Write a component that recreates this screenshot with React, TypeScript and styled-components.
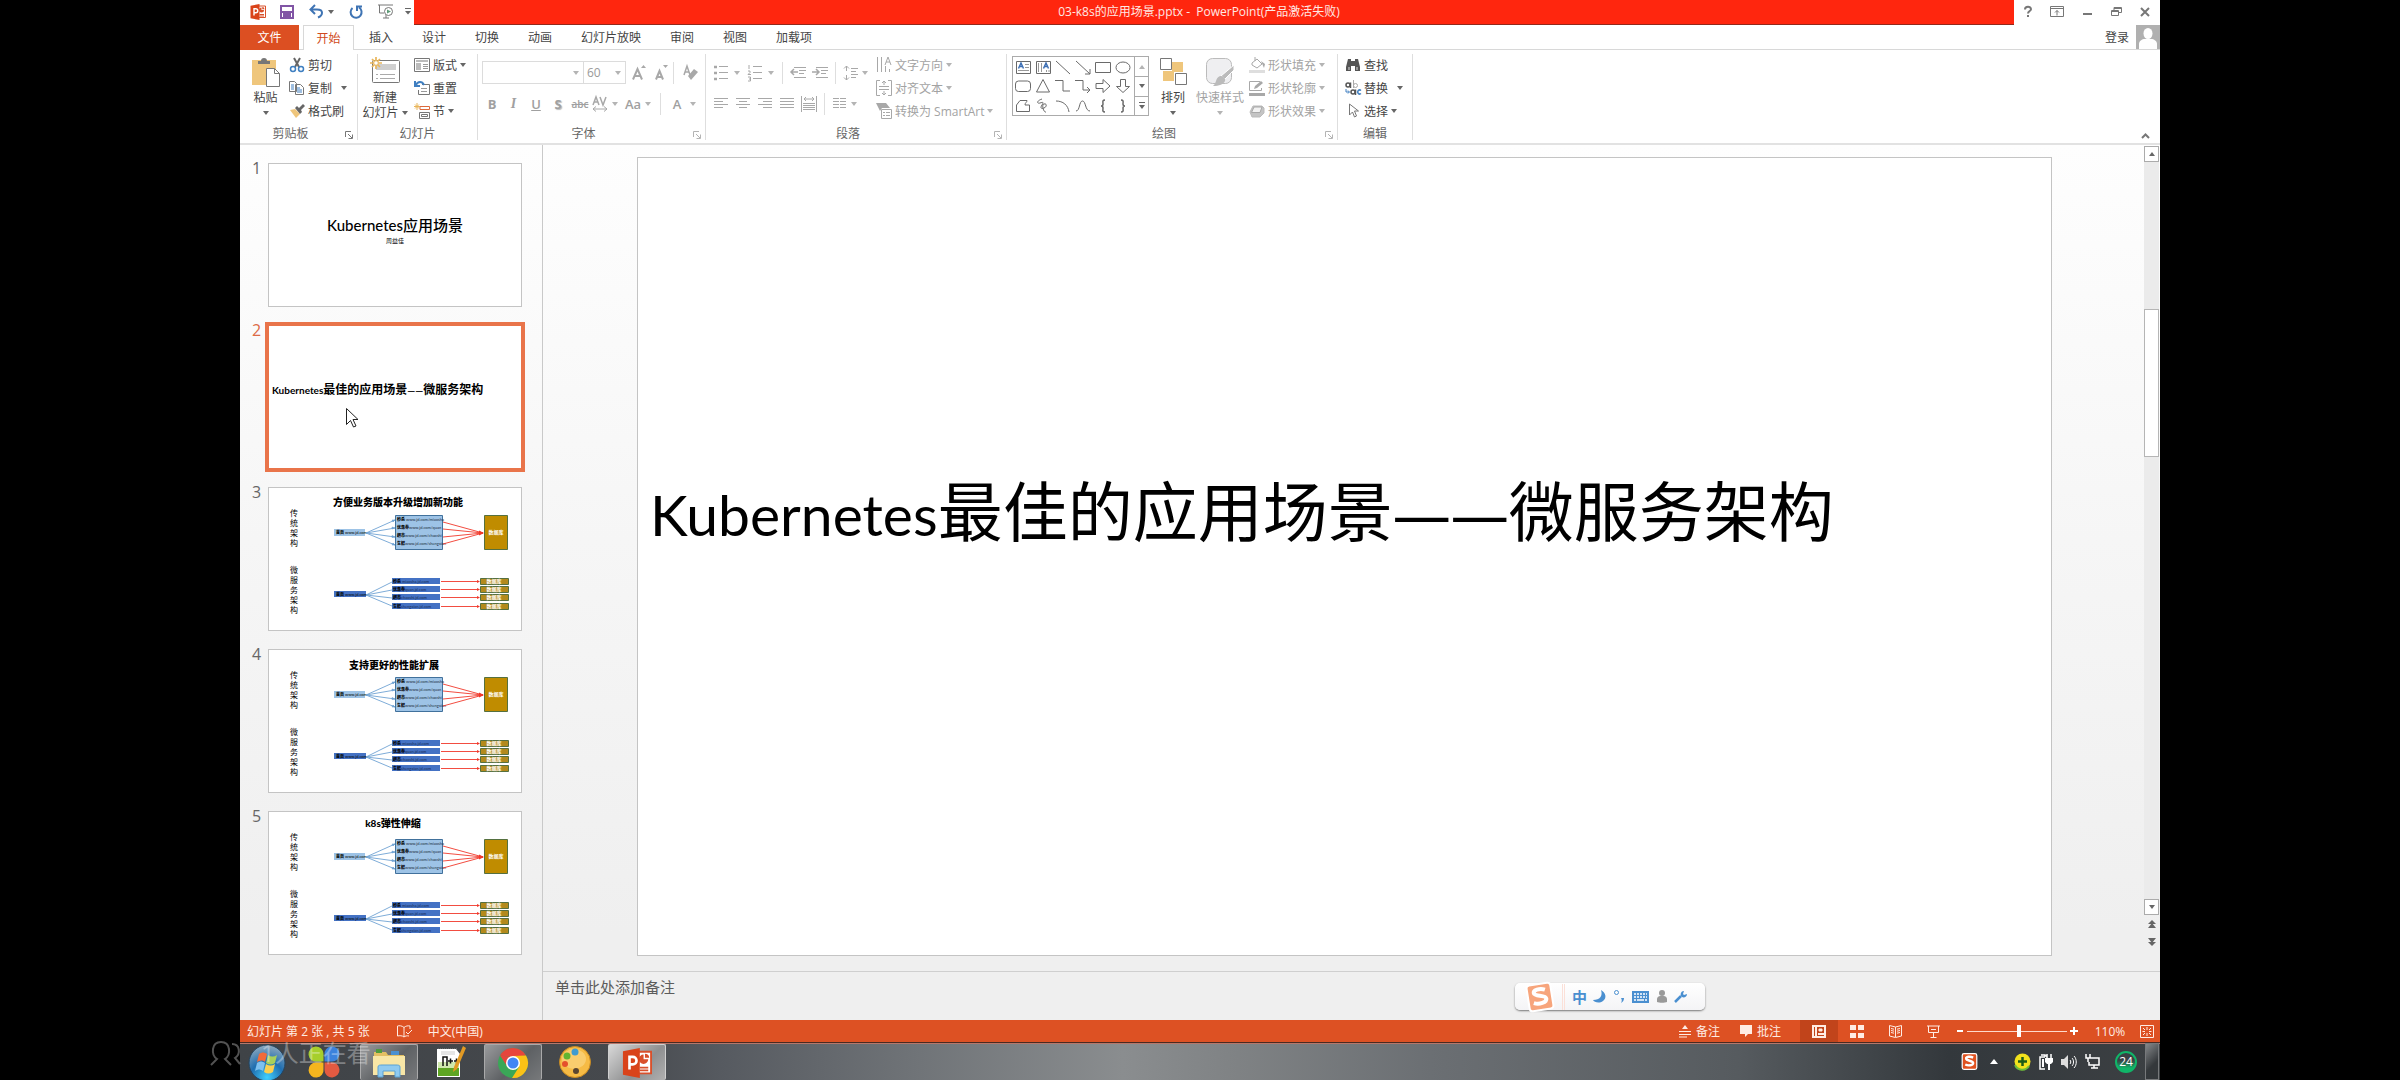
import React from "react";
import styled, { createGlobalStyle, css } from "styled-components";

const UI_FONT = '"Open Sans", "Noto Sans CJK SC", sans-serif';
const SLIDE_FONT = 'Lato, "Noto Sans CJK SC", sans-serif';

const Global = createGlobalStyle`
  * { box-sizing: border-box; }
  body { margin: 0; background: #000; font-family: ${UI_FONT}; font-size: 12px; color: #444; }
  button, select, input, textarea { font: inherit; color: inherit; margin: 0; padding: 0; border: 0; background: none; }
  svg { display: block; flex: none; overflow: visible; }
  h1, h2, p, ol { margin: 0; padding: 0; font: inherit; }
`;

/* ---------- shell ---------- */
const Desktop = styled.div`
  position: relative;
  display: flex;
  flex-direction: column;
  min-height: 100vh;
  margin: 0 10%;
  background: #fff;
`;
const TitleBar = styled.header`
  display: flex;
  height: 25px;
  background: #fff;
`;
const QuickAccess = styled.div`
  display: flex;
  align-items: center;
  padding-left: 10px;
  width: 174px;
  height: 23px;
`;
const QuickButton = styled.button<{ $w: number; $gap?: number }>`
  display: flex;
  align-items: center;
  justify-content: space-between;
  width: ${(p) => p.$w}px;
  margin-right: ${(p) => p.$gap ?? 0}px;
`;
const TitleText = styled.h1`
  flex: 1;
  padding-right: 30px;
  background: #ff260e;
  border-bottom: 1px solid #93281b;
  color: #ffe9e4;
  line-height: 24px;
  text-align: center;
  white-space: pre;
`;
const WindowControls = styled.div`
  display: flex;
  align-items: center;
  justify-content: space-between;
  width: 146px;
  height: 23px;
  padding: 0 10px;
`;
const PlainButton = styled.button`
  display: flex;
  align-items: center;
  justify-content: center;
`;

/* ---------- tabs ---------- */
const TabBar = styled.nav`
  display: flex;
  height: 25px;
  border-bottom: 1px solid #d8d8d8;
  line-height: 23px;
`;
const FileTab = styled.button`
  width: 59px;
  height: 25px;
  background: #dc4f22;
  color: #fff;
`;
const ActiveTab = styled.button`
  width: 51px;
  height: 25px;
  margin: 0 15px 0 4px;
  border: 1px solid #d8d8d8;
  border-bottom: 0;
  background: #fff;
  color: #d04a20;
`;
const TabList = styled.div`
  display: flex;
  flex: 1;
  gap: 29px;
`;
const SignIn = styled.button`
  margin-right: 7px;
`;

/* ---------- ribbon ---------- */
const Ribbon = styled.section`
  display: flex;
  height: 95px;
  padding-top: 4px;
  border-bottom: 2px solid #e2e2e2;
`;
const Group = styled.div<{ $w: number }>`
  display: flex;
  flex-direction: column;
  width: ${(p) => p.$w}px;
  height: 86px;
  border-right: 1px solid #dedede;
`;
const GroupBody = styled.div<{ $pad: number; $gap?: number }>`
  display: flex;
  height: 73px;
  padding-left: ${(p) => p.$pad}px;
  gap: ${(p) => p.$gap ?? 0}px;
`;
const GroupFoot = styled.div`
  display: flex;
  align-items: center;
  height: 13px;
  line-height: 13px;
  color: #666;
`;
const GroupName = styled.span`
  flex: 1;
  text-align: center;
`;
const Launcher = styled.button`
  width: 16px;
  padding: 3px 0 0 4px;
`;
const BigButton = styled.button<{ $w: number; $off?: boolean }>`
  display: flex;
  flex-direction: column;
  align-items: center;
  width: ${(p) => p.$w}px;
  height: 67px;
  padding-top: 3px;
  line-height: 15px;
  white-space: nowrap;
  color: ${(p) => (p.$off ? "#a3a3a3" : "#444")};
`;
const BigIcon = styled.span`
  height: 33px;
`;
const BigLine = styled.span`
  display: flex;
  align-items: center;
  gap: 3px;
  height: 15px;
`;
const RowStack = styled.div`
  display: flex;
  flex-direction: column;
`;
const RowButton = styled.button<{ $off?: boolean }>`
  display: flex;
  align-items: center;
  gap: 3px;
  height: 23px;
  padding-bottom: 2px;
  white-space: nowrap;
  color: ${(p) => (p.$off ? "#a3a3a3" : "#444")};
`;
const ToolRows = styled.div`
  display: flex;
  flex-direction: column;
  gap: 8px;
  padding-top: 7px;
`;
const ToolRow = styled.div`
  display: flex;
  align-items: center;
  height: 23px;
`;
const Tool = styled.button<{ $w: number }>`
  display: flex;
  align-items: center;
  justify-content: space-between;
  width: ${(p) => p.$w}px;
  height: 22px;
  color: #a0a0a0;
`;
const Glyph = styled(Tool)<{ $look?: "b" | "i" | "u" | "s" | "x" }>`
  justify-content: center;
  font-size: 13px;
  font-weight: 600;
  ${(p) => p.$look === "b" && css`font-weight: 700;`}
  ${(p) => p.$look === "i" && css`font-family: "Liberation Serif", serif; font-style: italic; font-size: 14px;`}
  ${(p) => p.$look === "u" && css`text-decoration: underline;`}
  ${(p) => p.$look === "s" && css`font-weight: 700; text-shadow: 1px 1px 1px #bbb;`}
  ${(p) => p.$look === "x" && css`text-decoration: line-through; font-size: 10px;`}
`;
const Gap = styled.span<{ $w: number }>`
  width: ${(p) => p.$w}px;
`;
const Rule = styled.span`
  width: 1px;
  height: 22px;
  background: #dedede;
`;
const Combo = styled.label<{ $w: number }>`
  display: flex;
  align-items: center;
  width: ${(p) => p.$w}px;
  height: 23px;
  padding: 0 4px 0 3px;
  margin-right: -1px;
  border: 1px solid #dcdcdc;
  color: #9a9a9a;
  select { flex: 1; min-width: 0; appearance: none; outline: 0; opacity: 1; }
`;
const Gallery = styled.div`
  display: flex;
  width: 137px;
  height: 60px;
  margin-top: 2px;
  border: 1px solid #ababab;
`;
const Shapes = styled.div`
  display: grid;
  flex: 1;
  grid-template-columns: repeat(6, 20px);
  grid-auto-rows: 1fr;
`;
const GallerySide = styled.div`
  display: grid;
  grid-template-rows: 1fr 1fr 1fr;
  width: 14px;
  button { display: grid; place-items: center; border-left: 1px solid #ababab; }
  button + button { border-top: 1px solid #ababab; }
`;
const RibbonEnd = styled.div`
  display: flex;
  flex: 1;
  align-items: flex-end;
  justify-content: flex-end;
  padding: 0 10px 4px 0;
`;

/* ---------- workspace ---------- */
const Workspace = styled.main`
  display: flex;
  flex: 1;
  background: linear-gradient(#fefefe, #f6f6f6 45%, #efefef 90%);
`;
const ThumbPane = styled.ol`
  display: flex;
  flex-direction: column;
  gap: 18px;
  width: 303px;
  padding: 18px 0 0 12px;
  border-right: 1px solid #c9c9c9;
  list-style: none;
`;
const ThumbItem = styled.li<{ $on?: boolean }>`
  display: flex;
  color: ${(p) => (p.$on ? "#dd6a45" : "#666")};
  font-size: 16px;
  line-height: 10px;
`;
const ThumbNumber = styled.span`
  width: 16px;
`;
const Thumb = styled.button<{ $on?: boolean }>`
  position: relative;
  display: flex;
  flex-direction: column;
  justify-content: center;
  width: 254px;
  height: 144px;
  background: #fff;
  color: #000;
  font-family: ${SLIDE_FONT};
  outline: ${(p) => (p.$on ? "4px solid #e9744a" : "1px solid #c4c4c4")};
  outline-offset: -1px;
`;
const ThumbTitle = styled.span`
  align-self: center;
  padding-bottom: 4px;
  font-size: 15px;
  font-weight: 500;
  line-height: 16px;
`;
const ThumbAuthor = styled.span`
  align-self: center;
  padding-bottom: 8px;
  font-size: 6px;
  line-height: 8px;
`;
const ThumbHeading = styled.span`
  padding: 0 0 14px 4px;
  font-size: 12px;
  line-height: 14px;
  font-weight: 700;
  text-align: left;
  white-space: nowrap;
`;
const ThumbLatin = styled.span`
  font-size: 10px;
`;
const Pointer = styled.svg`
  position: absolute;
  left: 78px;
  top: 83px;
`;
const Editor = styled.section`
  display: flex;
  flex: 1;
  flex-direction: column;
  min-width: 0;
`;
const Stage = styled.div`
  display: flex;
  flex: 1;
`;
const Canvas = styled.div`
  flex: 1;
  padding: 12px 92px 14px 94px;
`;
const Slide = styled.article`
  display: flex;
  align-items: center;
  aspect-ratio: 1415 / 799;
  padding: 0 0 88px 12px;
  border: 1px solid #c4c4c4;
  background: #fff;
`;
const SlideTitle = styled.h2`
  color: #000;
  font-family: ${SLIDE_FONT};
  font-size: 65px;
  line-height: 80px;
  white-space: nowrap;
`;
const SlideLatin = styled.span`
  font-size: 57px;
`;
const SlideDash = styled.span`
  font-family: "Open Sans", sans-serif;
  font-size: 58px;
`;
const ScrollColumn = styled.div`
  display: flex;
  flex-direction: column;
  width: 16px;
  padding: 1px 1px 20px 0;
`;
const ScrollTrack = styled.div`
  flex: 1;
  padding-top: 147px;
  background: #ebebeb;
`;
const ScrollThumb = styled.div`
  height: 148px;
  border: 1px solid #b5b5b5;
  background: #fff;
`;
const ScrollButton = styled.button<{ $plain?: boolean }>`
  display: grid;
  place-items: center;
  height: ${(p) => (p.$plain ? 18 : 16)}px;
  border: ${(p) => (p.$plain ? "0" : "1px solid #ababab")};
  background: ${(p) => (p.$plain ? "transparent" : "#fff")};
`;
const Notes = styled.textarea`
  height: 49px;
  padding: 3px 0 0 12px;
  border-top: 1px solid #cfcfcf;
  font-size: 15px;
  line-height: 24px;
  resize: none;
  outline: 0;
  &::placeholder { color: #5c5c5c; opacity: 1; }
`;

/* ---------- floating input bar ---------- */
const InputBar = styled.div`
  position: absolute;
  right: 455px;
  bottom: 70px;
  display: flex;
  align-items: center;
  width: 190px;
  height: 27px;
  padding-left: 11px;
  border-radius: 5px;
  background: linear-gradient(#fff, #f4f4f6);
  box-shadow: 0 1px 2px #777;
  color: #4a8fd0;
`;
const InputLang = styled.span`
  width: 21px;
  font-size: 15px;
  font-weight: 700;
  line-height: 20px;
`;
const InputRule = styled.span`
  width: 3px;
  height: 26px;
  margin: 0 7px 0 8px;
  border: solid #fbe0d8;
  border-width: 0 1px;
`;

/* ---------- status bar ---------- */
const StatusBar = styled.footer`
  display: flex;
  align-items: center;
  height: 22px;
  padding: 0 6px 0 7px;
  background: #dd5123;
  color: #ffece4;
  white-space: pre;
`;
const StatusButton = styled.button<{ $mr: number }>`
  display: flex;
  align-items: center;
  gap: 5px;
  margin-right: ${(p) => p.$mr}px;
`;
const Spacer = styled.span`
  flex: 1;
`;
const ViewButton = styled.button<{ $on?: boolean }>`
  display: grid;
  place-items: center;
  width: 38px;
  height: 22px;
  background: ${(p) => (p.$on ? "#c1441b" : "transparent")};
`;
const Zoom = styled.input`
  width: 100px;
  height: 14px;
  margin: 0 3px 0 4px;
  appearance: none;
  background: linear-gradient(#ffd9cb, #ffd9cb) center / 100% 1px no-repeat;
  &::-webkit-slider-thumb { appearance: none; width: 4px; height: 12px; background: #fff; }
`;
const ZoomValue = styled.button`
  width: 34px;
  margin: 0 13px 0 15px;
`;

/* ---------- taskbar ---------- */
const TaskBar = styled.footer`
  display: flex;
  height: 38px;
  border-top: 1px solid #4a2a22;
  box-shadow: inset 0 1px #b5776a;
  background: linear-gradient(90deg, #3f4347 0%, #46494d 20%, #565a60 25%, #6f7377 35%, #8a8d8f 46%, #7f8284 52%, #6b6f73 62%, #565b5f 78%, #33383c 89%, #3c4043 100%);
`;
const TaskButton = styled.button<{ $w: number; $tone?: "open" | "active"; $gap?: number }>`
  display: grid;
  place-items: center;
  width: ${(p) => p.$w}px;
  margin: 1px ${(p) => p.$gap ?? 0}px 0 0;
  ${(p) =>
    p.$tone === "open" &&
    css`background: linear-gradient(135deg, #9a9b9d, #5e6164 55%, #77797b); border: 1px solid #a9a9aa; border-bottom: 0; border-radius: 2px;`}
  ${(p) =>
    p.$tone === "active" &&
    css`background: linear-gradient(135deg, #d8d8d8, #8f9091 60%, #b0b0b0); border: 1px solid #d0d0d0; border-bottom: 0; border-radius: 2px;`}
`;
const Tray = styled.div`
  display: flex;
  align-items: center;
  gap: 8px;
  margin-left: auto;
  padding-right: 1px;
`;
const TrayBadge = styled.span`
  display: grid;
  place-items: center;
  width: 22px;
  height: 22px;
  margin-left: 7px;
  border: 2px solid #10b568;
  border-radius: 50%;
  background: linear-gradient(#3b4044 40%, #10b568 85%);
  color: #fff;
  line-height: 18px;
`;
const ShowDesktop = styled.button`
  align-self: stretch;
  width: 14px;
  border: 1px solid #77797b;
  background: linear-gradient(135deg, #85888a, #34383b 60%);
`;
const Watermark = styled.div`
  position: absolute;
  left: -30px;
  bottom: 14px;
  display: flex;
  align-items: center;
  gap: 21px;
  color: #fff;
  font-size: 24px;
  line-height: 24px;
  opacity: 0.32;
  pointer-events: none;
`;

/* ---------- icon helpers ---------- */
type IcoProps = { w: number; h: number; children: React.ReactNode; c?: string; sw?: number };
const Ico = ({ w, h, children, c = "#777", sw = 1 }: IcoProps) => (
  <svg width={w} height={h} viewBox={`0 0 ${w} ${h}`} fill="none" stroke={c} strokeWidth={sw} aria-hidden="true">
    {children}
  </svg>
);
const Caret = ({ off, up, ml }: { off?: boolean; up?: boolean; ml?: number }) => (
  <>
    {ml ? <Gap $w={ml} /> : null}
    <Ico w={6} h={4} c="none">
      <path d={up ? "M0 4h6L3 0z" : "M0 0h6L3 4z"} fill={off ? "#b4b4b4" : "#666"} />
    </Ico>
  </>
);
const PptLogo = ({ s }: { s: number }) => (
  <svg width={s} height={s} viewBox="0 0 32 32" aria-hidden="true">
    <path d="M17 4h14v23H17z" fill="#fff" stroke="#d9502b" strokeWidth="2" />
    <path d="M23 7a5 5 0 1 0 5 5h-5zM24.500 6v4.500H29A4.500 4.500 0 0 0 24.500 6zM19 20h9v1.800h-9zM19 23h9v1.800h-9z" fill="#d9502b" />
    <path d="M1 3.500 19 0v32L1 28.500z" fill="#d9431a" />
    <path d="M8 23V9.500h3.500a4 4 0 0 1 0 8H8" fill="none" stroke="#fff" strokeWidth="2.800" />
  </svg>
);
const LauncherIcon = ({ off }: { off?: boolean }) => (
  <Ico w={8} h={8} c={off ? "#b4b4b4" : "#777"}>
    <path d="M.5 6V.5H6M3 3l4 4M7.500 3.500v4h-4" />
  </Ico>
);
const lines = (rows: number[][]) => rows.map(([x, y, l], i) => <path key={i} d={`M${x} ${y}.5h${l}`} />);
const G = "#a8a8a8";

const SHAPES: React.ReactNode[] = [
  <g key="a"><path d="M3.500 4.500h14v12h-14z" /><path d="M12 7.500h4M12 10.500h4M5 13.500h11" stroke="#999" /><path d="M5.500 11.500 8 6l2.500 5.500M6.500 9.500h3" stroke="#3d6fb4" strokeWidth="1.500" /></g>,
  <g key="b"><path d="M3.500 4.500h14v12h-14z" /><path d="M5.500 6v9M8.500 6v9M13.500 13v2M16 13v2" stroke="#999" /><path d="M10.500 11.500 13 6l2.500 5.500M11.500 9.500h3" stroke="#3d6fb4" strokeWidth="1.500" /></g>,
  <path key="c" d="M3 4l14 13" />,
  <path key="d" d="M3 4l14 13M17 12v5h-5" />,
  <path key="e" d="M2.500 5.500h15v10h-15z" />,
  <ellipse key="f" cx="10" cy="10.500" rx="7" ry="5.500" />,
  <rect key="g" x="2.500" y="5" width="15" height="10.500" rx="3" />,
  <path key="h" d="M10 3.500 16.500 16h-13z" />,
  <path key="i" d="M2 4.500h8V15h7" />,
  <path key="j" d="M2 4.500h8V14h7M14 11l3 3-3 3" />,
  <path key="k" d="M3 7.500h7V3.500l7 6.500-7 6.500v-4H3z" />,
  <path key="l" d="M7.500 3.500v7h-4l6.500 6 6.500-6h-4v-7z" />,
  <path key="m" d="M3.500 15.500V9L7 4.500h7c0 2-2 2-2 4.500h4.500v6.500z" />,
  <path key="n" d="M9 3C3 5 4 8 7 7s4-1 2 2-1 4 2 3 3-5 0-4 0 9 2 8" />,
  <path key="o" d="M3 5c7 0 12 4 13 11" />,
  <path key="p" d="M3 15C7 15 6 5 9.500 5S12 15 17 15" />,
  <path key="q" d="M12 4c-3 0-2 2-2 4s-2 2-2 2 2 0 2 2-1 4 2 4" strokeWidth="1.500" />,
  <path key="r" d="M8 4c3 0 2 2 2 4s2 2 2 2-2 0-2 2 1 4-2 4" strokeWidth="1.500" />,
];

/* ---------- slide diagrams ---------- */
const TOP_ROWS = [
  ["秒杀", " www.jd.com/miaosha"],
  ["优惠券", "www.jd.com/quan"],
  ["超市", "www.jd.com/chaoshi"],
  ["生鲜", "www.jd.com/shengxian"],
];
const LOW_ROWS = [
  ["秒杀", " miaosha.jd.com"],
  ["优惠券", "quan.jd.com"],
  ["超市", "chaoshi.jd.com"],
  ["生鲜", "shengxian.jd.com"],
];
const LOW_Y = [91, 99, 107, 116];

const Diagram = ({ title, y, x }: { title: string; y: number; x: number }) => (
  <svg width="254" height="144" viewBox="0 0 254 144" fontFamily={SLIDE_FONT}>
    <text x={x} y={y} fontSize="10" fontWeight="900" textAnchor="middle">{title}</text>
    {"传统架构".split("").map((c, i) => <text key={i} x="22" y={29 + i * 10} fontSize="8">{c}</text>)}
    {"微服务架构".split("").map((c, i) => <text key={i} x="22" y={86 + i * 10} fontSize="8">{c}</text>)}
    <path d="M66 42h31v7H66z" fill="#9dc3e6" />
    <path d="M66 104h32v6H66z" fill="#4472c4" />
    <text x="68" y="47" fontSize="4"><tspan fontWeight="900">首页</tspan> www.jd.com</text>
    <text x="68" y="109" fontSize="4"><tspan fontWeight="900">首页</tspan> www.jd.com</text>
    <path d="M98 46l29-13M98 46l29-5M98 46l29 4M98 46l29 12M98 108l26-13M98 108l26-5M98 108l26 3M98 108l26 11" stroke="#6fa3d4" strokeWidth=".9" />
    <path d="M127 33l-3 0 1 2zM127 41l-3-1v2zM127 50l-3-1.500v2zM127 58l-2-2-1 2z" stroke="#6fa3d4" fill="#6fa3d4" strokeWidth=".6" />
    <path d="M127.500 28.500h47v34h-47z" fill="#9dc3e6" stroke="#41719c" />
    {TOP_ROWS.map(([a, b], i) => (
      <text key={a} x="129" y={34 + i * 8} fontSize="4" fill="#1f2d3d"><tspan fontWeight="900" fill="#000">{a}</tspan>{b}</text>
    ))}
    <path d="M175 35l40 11M175 42l40 4M175 50l40-4M175 57l40-11" stroke="#f0392b" strokeWidth=".9" />
    <path d="M211 43.500l5 2.500-5 2.500z" fill="#f0392b" />
    <path d="M216.500 28.500h23v34h-23z" fill="#c08c00" stroke="#55703f" />
    <text x="228" y="47" fontSize="5" fontWeight="700" fill="#fff" textAnchor="middle">数据库</text>
    {LOW_ROWS.map(([a, b], i) => (
      <g key={a}>
        <path d={`M124 ${LOW_Y[i]}h48v6h-48z`} fill="#4472c4" />
        <text x="125" y={LOW_Y[i] + 5} fontSize="4" fill="#172c55"><tspan fontWeight="900" fill="#000">{a}</tspan>{b}</text>
        <path d={`M173 ${LOW_Y[i] + 3}.5h37`} stroke="#f0392b" strokeWidth=".9" />
        <path d={`M209 ${LOW_Y[i] + 2}l3 1.500-3 1.500z`} fill="#f0392b" />
        <path d={`M212.500 ${LOW_Y[i]}.5h28v6h-28z`} fill="#b38a1c" stroke="#55703f" />
        <text x="226" y={LOW_Y[i] + 5} fontSize="5" fontWeight="700" fill="#fff" textAnchor="middle">数据库</text>
      </g>
    ))}
  </svg>
);

const Foot = ({ name, launch, off }: { name: string; launch?: boolean; off?: boolean }) => (
  <GroupFoot>
    <GroupName>{name}</GroupName>
    {launch && <Launcher aria-label={name}><LauncherIcon off={off} /></Launcher>}
  </GroupFoot>
);

const ClipboardGroup = () => (
  <Group $w={118}>
    <GroupBody $pad={9} $gap={7}>
      <BigButton $w={33}>
        <BigIcon>
          <Ico w={28} h={30}>
            <path d="M0 3h24v25H0z" fill="#efc67c" stroke="none" />
            <path d="M6 7V4h3a3 3 0 0 1 6 0h3v3z" fill="#777" stroke="none" />
            <path d="M14.500 11.500h8l5 5v13h-13z" fill="#fff" /><path d="M22.500 11.500v5h5" />
          </Ico>
        </BigIcon>
        <BigLine>粘贴</BigLine>
        <BigLine><Caret /></BigLine>
      </BigButton>
      <RowStack>
        <RowButton>
          <Ico w={16} h={16}>
            <path d="M5 1l5 9M11 1L6 10" stroke="#666" strokeWidth="2" />
            <circle cx="4" cy="12" r="2.500" stroke="#3f7fc1" strokeWidth="1.500" /><circle cx="12" cy="12" r="2.500" stroke="#3f7fc1" strokeWidth="1.500" />
          </Ico>
          剪切
        </RowButton>
        <RowButton>
          <Ico w={16} h={16}>
            <path d="M.5 1.500h5l2 2v8h-7zM6.500 4.500h5l3 3v7h-8z" fill="#fff" />
            <path d="M2 5h3M2 7h3M2 9h3M8 8h3M8 10h5M8 12h5" stroke="#3f7fc1" />
          </Ico>
          复制<Caret ml={3} />
        </RowButton>
        <RowButton>
          <Ico w={16} h={16} c="none">
            <path d="M1 7l5-1 5 5-4 4z" fill="#efc67c" /><path d="M6 5l2-2 2 2 4-4 2 2-4 4 1 2-2 2z" fill="#666" />
          </Ico>
          格式刷
        </RowButton>
      </RowStack>
    </GroupBody>
    <Foot name="剪贴板" launch />
  </Group>
);

const SlidesGroup = () => (
  <Group $w={120}>
    <GroupBody $pad={5} $gap={7}>
      <BigButton $w={44}>
        <BigIcon>
          <Ico w={30} h={30}>
            <rect x="2.500" y="3.500" width="27" height="22" rx="1" fill="#fff" />
            <path d="M6 7h20v6H6z" fill="#cfcfcf" stroke="none" />
            <path d="M6 17.500h2M10 17.500h15M6 21.500h2M10 21.500h15" stroke="#aaa" />
            <path d="M6 0v12M0 6h12M2 2l8 8M10 2l-8 8" stroke="#e9b65b" strokeWidth="1.700" /><circle cx="6" cy="6" r="2.300" fill="#fff" stroke="#e9b65b" />
          </Ico>
        </BigIcon>
        <BigLine>新建</BigLine>
        <BigLine>幻灯片<Caret /></BigLine>
      </BigButton>
      <RowStack>
        <RowButton>
          <Ico w={16} h={16}>
            <path d="M.5 1.500h15v13H.5z" /><path d="M2 3h12v2H2zM2 6h5v7H2z" fill="#bbb" stroke="none" /><path d="M9 7.500h5M9 9.500h5M9 11.500h5" stroke="#999" />
          </Ico>
          版式<Caret />
        </RowButton>
        <RowButton>
          <Ico w={16} h={16}>
            <path d="M8 4.500h7.500v10H4.500V10" /><path d="M7 8.500h6M7 11.500h6" stroke="#999" /><path d="M1 1v5h5M1.500 5.500C4 1 8 1 10 5" stroke="#3f7fc1" strokeWidth="2" />
          </Ico>
          重置
        </RowButton>
        <RowButton>
          <Ico w={16} h={16}>
            <path d="M6 3.500h9.500v3H6z" stroke="#dd6a3c" /><path d="M5.500 9.500h10v6h-10zM7.500 11.500h6v2h-6z" /><path d="M3 0v7M0 3.500h6M1 1.500l4 4M5 1.500l-4 4" stroke="#e9b65b" />
          </Ico>
          节<Caret />
        </RowButton>
      </RowStack>
    </GroupBody>
    <Foot name="幻灯片" />
  </Group>
);

const FontGroup = () => (
  <Group $w={228}>
    <GroupBody $pad={4}>
      <ToolRows>
        <ToolRow>
          <Combo $w={102}><select aria-label="字体" disabled><option></option></select><Caret off /></Combo>
          <Combo $w={43}><select aria-label="字号" disabled><option>60</option></select><Caret off /></Combo>
          <Gap $w={7} />
          <Tool $w={14} aria-label="增大字号"><Ico w={14} h={16} c={G} sw={2}><path d="M1 14.500 5.500 4l4.500 10.500M2.500 11h6" /><path d="M9 3h5l-2.500-3z" fill={G} stroke="none" /></Ico></Tool>
          <Gap $w={9} />
          <Tool $w={14} aria-label="减小字号"><Ico w={14} h={16} c={G} sw={2}><path d="M1 14.500 4.500 6 8 14.500M2.500 12h4" /><path d="M8 0h5l-2.500 3z" fill={G} stroke="none" /></Ico></Tool>
          <Gap $w={4} /><Rule /><Gap $w={9} />
          <Tool $w={15} aria-label="清除格式"><Ico w={15} h={16} c={G}><path d="M1 10 4 1l3 9M2 7h4" strokeWidth="1.500" /><path d="M5 11l6-7 4 3-7 8z" fill={G} stroke="none" /></Ico></Tool>
        </ToolRow>
        <ToolRow>
          <Glyph $w={20} $look="b">B</Glyph>
          <Glyph $w={23} $look="i">I</Glyph>
          <Glyph $w={22} $look="u">U</Glyph>
          <Glyph $w={22} $look="s">S</Glyph>
          <Glyph $w={22} $look="x">abc</Glyph>
          <Gap $w={1} />
          <Tool $w={26} aria-label="字符间距"><Ico w={16} h={16} c={G}><path d="M1 9 4 1l3 8M2 6h4M8 1l3 8 3-8" strokeWidth="1.500" /><path d="M1 13h14M4 10.500 1 13l3 2.500M12 10.500l3 2.500-3 2.500" /></Ico><Caret off /></Tool>
          <Gap $w={6} />
          <Glyph $w={18}>Aa</Glyph><Gap $w={3} /><Caret off />
          <Gap $w={9} /><Rule /><Gap $w={6} />
          <Glyph $w={20}>A</Glyph><Gap $w={3} /><Caret off />
        </ToolRow>
      </ToolRows>
    </GroupBody>
    <Foot name="字体" launch off />
  </Group>
);

const AlignIcon = ({ rows }: { rows: number[][] }) => <Ico w={14} h={13} c={G}>{lines(rows)}</Ico>;

const ParagraphGroup = () => (
  <Group $w={301}>
    <GroupBody $pad={8}>
      <ToolRows>
        <ToolRow>
          <Tool $w={26} aria-label="项目符号"><Ico w={14} h={16} c={G}><path d="M0 2h3M0 8h3M0 14h3" strokeWidth="2.500" />{lines([[5, 1, 9], [5, 7, 9], [5, 13, 9]])}</Ico><Caret off /></Tool>
          <Gap $w={8} />
          <Tool $w={26} aria-label="编号"><Ico w={14} h={16} c={G}><path d="M1 0v4M0 6h2v1.500L0 9.500h3M0 12h2.500v4H0M1 14h1" />{lines([[5, 1, 9], [5, 7, 9], [5, 13, 9]])}</Ico><Caret off /></Tool>
          <Gap $w={8} /><Rule /><Gap $w={7} />
          <Tool $w={16} aria-label="减少缩进"><Ico w={16} h={13} c={G}>{lines([[4, 1, 12], [9, 4, 7], [9, 7, 5], [4, 11, 12]])}<path d="M1 6h7M4 3 1 6l3 3" strokeWidth="1.500" /></Ico></Tool>
          <Gap $w={6} />
          <Tool $w={16} aria-label="增加缩进"><Ico w={16} h={13} c={G}>{lines([[4, 1, 12], [9, 4, 7], [9, 7, 5], [4, 11, 12]])}<path d="M0 6h7M4 3l3 3-3 3" strokeWidth="1.500" /></Ico></Tool>
          <Gap $w={7} /><Rule /><Gap $w={8} />
          <Tool $w={24} aria-label="行距"><Ico w={14} h={16} c={G}><path d="M2.500 1v5M0 3.500 2.500 1 5 3.500M2.500 15v-5M0 12.500 2.500 15 5 12.500" />{lines([[7, 3, 7], [7, 6, 5], [7, 9, 7], [7, 12, 5]])}</Ico><Caret off /></Tool>
        </ToolRow>
        <ToolRow>
          <Tool $w={14} aria-label="左对齐"><AlignIcon rows={[[0, 1, 14], [0, 4, 9], [0, 7, 14], [0, 10, 9]]} /></Tool>
          <Gap $w={8} />
          <Tool $w={14} aria-label="居中"><AlignIcon rows={[[0, 1, 14], [3, 4, 8], [0, 7, 14], [3, 10, 8]]} /></Tool>
          <Gap $w={8} />
          <Tool $w={14} aria-label="右对齐"><AlignIcon rows={[[0, 1, 14], [5, 4, 9], [0, 7, 14], [5, 10, 9]]} /></Tool>
          <Gap $w={8} />
          <Tool $w={14} aria-label="两端对齐"><AlignIcon rows={[[0, 1, 14], [0, 4, 14], [0, 7, 14], [0, 10, 14]]} /></Tool>
          <Gap $w={7} />
          <Tool $w={16} aria-label="分散对齐"><Ico w={16} h={16} c={G}><path d="M.5 0v16M15.500 0v16M3 3h10M5 1 3 3l2 2M11 1l2 2-2 2" />{lines([[2, 7, 12], [2, 9, 12], [2, 11, 12], [2, 13, 12]])}</Ico></Tool>
          <Gap $w={7} /><Rule /><Gap $w={8} />
          <Tool $w={24} aria-label="分栏"><Ico w={13} h={13} c={G}>{lines([[0, 1, 6], [7, 1, 6], [0, 4, 6], [7, 4, 6], [0, 7, 6], [7, 7, 6], [0, 10, 6], [7, 10, 6]])}</Ico><Caret off /></Tool>
        </ToolRow>
      </ToolRows>
      <Gap $w={8} />
      <RowStack>
        <RowButton $off><Ico w={16} h={16} c={G}><path d="M1.500 0v15M5.500 0v15M9.500 9v6M13.500 12v3M9 8l3-8 3 8M10 5h4" /></Ico>文字方向<Caret off /></RowButton>
        <RowButton $off><Ico w={16} h={16} c={G}><path d="M4 .5H.5v15H4M12 .5h3.500v15H12M8 1v4M6 3l2-2 2 2M8 15v-4M6 13l2 2 2-2M3 6.500h10M3 9.500h10" /></Ico>对齐文本<Caret off /></RowButton>
        <RowButton $off><Ico w={16} h={16} c={G}><path d="M0 0h10l4 5h-8l-2 3z" fill={G} stroke="none" /><path d="M5.500 6.500h10v9h-10z" fill="#fff" /><path d="M7 9.500h2M10 9.500h4M7 12.500h2M10 12.500h4" /></Ico>转换为 SmartArt<Caret off /></RowButton>
      </RowStack>
    </GroupBody>
    <Foot name="段落" launch off />
  </Group>
);

const DrawingGroup = () => (
  <Group $w={331}>
    <GroupBody $pad={5}>
      <Gallery>
        <Shapes>
          {SHAPES.map((s, i) => (
            <PlainButton key={i} aria-label={`形状 ${i + 1}`}><Ico w={20} h={19} c="#6a6a6a">{s}</Ico></PlainButton>
          ))}
        </Shapes>
        <GallerySide>
          <button aria-label="上一行"><Caret off up /></button>
          <button aria-label="下一行"><Caret /></button>
          <button aria-label="其他"><Ico w={6} h={8} c="#666"><path d="M0 .5h6" /><path d="M0 3h6L3 7z" fill="#666" stroke="none" /></Ico></button>
        </GallerySide>
      </Gallery>
      <Gap $w={7} />
      <BigButton $w={34}>
        <BigIcon>
          <Ico w={28} h={28}>
            <path d="M13 5h11v10H13zM4 14h11v10H4z" fill="#efc67c" stroke="none" />
            <path d="M1.500 1.500h11v11h-11zM16.500 16.500h11v11h-11z" fill="#fff" />
          </Ico>
        </BigIcon>
        <BigLine>排列</BigLine>
        <BigLine><Caret /></BigLine>
      </BigButton>
      <Gap $w={4} />
      <BigButton $w={52} $off>
        <BigIcon>
          <Ico w={30} h={30} c="#bbb">
            <rect x="1.500" y="1.500" width="25" height="25" rx="6" fill="#efeff1" />
            <path d="M29 8v5l-9 9-4-3z" fill="#bbb" stroke="#fff" /><path d="M15 19c3 0 6 2 5 5s-6 5-12 5c4-3 2-8 7-10z" fill="#bbb" stroke="none" />
          </Ico>
        </BigIcon>
        <BigLine>快速样式</BigLine>
        <BigLine><Caret off /></BigLine>
      </BigButton>
      <Gap $w={3} />
      <RowStack>
        <RowButton $off><Ico w={16} h={16} c={G}><path d="M3 6l5-4 5 5-5 4-5-3zM6 4V0" /><path d="M12 4l4 3-1 4z" fill={G} stroke="none" /><path d="M0 13h16v3H0z" fill="#dedede" stroke="none" /></Ico>形状填充<Caret off /></RowButton>
        <RowButton $off><Ico w={16} h={16} c={G}><path d="M11 1.500H.5v9h12V8" /><path d="M5 9l1-3 6-5 2 2-6 5z" fill={G} stroke="none" /><path d="M0 13h16v3H0z" fill={G} stroke="none" /></Ico>形状轮廓<Caret off /></RowButton>
        <RowButton $off><Ico w={16} h={16} c={G}><path d="M1 9l3-6h9l2 2v5l-4 4H3z" fill="#c4c4c4" stroke="#bbb" /><path d="M2.500 9.500 5 4h8l-2 5.500z" fill="#f2f2f2" /></Ico>形状效果<Caret off /></RowButton>
      </RowStack>
    </GroupBody>
    <Foot name="绘图" launch off />
  </Group>
);

const EditGroup = () => (
  <Group $w={75}>
    <GroupBody $pad={7}>
      <RowStack>
        <RowButton>
          <Ico w={16} h={14} c="none"><path d="M3 1h3v2h4V1h3l2 8v4h-5V8H6v5H1V9z" fill="#555" /><path d="M3 9h2v3H3zM11 9h2v3h-2z" fill="#999" /></Ico>查找
        </RowButton>
        <RowButton>
          <Ico w={16} h={16}>
            <circle cx="3" cy="5" r="2" stroke="#555" strokeWidth="1.500" /><path d="M5.500 2.500V8" stroke="#555" strokeWidth="1.500" />
            <path d="M8.500 0v8" stroke="#aaa" /><circle cx="10.500" cy="5.500" r="2" stroke="#aaa" />
            <path d="M1 9v3h3M3 10.500l1.500 1.500L3 13.500" stroke="#3f7fc1" /><circle cx="8" cy="12" r="2" stroke="#555" strokeWidth="1.500" /><path d="M10.500 9.500V15" stroke="#555" strokeWidth="1.500" />
            <path d="M16 10.500a2 2 0 1 0 0 3" stroke="#3f7fc1" strokeWidth="1.500" />
          </Ico>
          替换<Caret ml={3} />
        </RowButton>
        <RowButton>
          <Ico w={16} h={15}><path d="M4.500 1v11l3-3 2 5 2-1-2-5h4z" fill="#fff" /></Ico>选择<Caret />
        </RowButton>
      </RowStack>
    </GroupBody>
    <Foot name="编辑" />
  </Group>
);

const SogouMark = ({ s, soft }: { s: number; soft?: boolean }) => (
  <svg width={s} height={s} viewBox="0 0 28 28" aria-hidden="true">
    <g transform={soft ? "rotate(-9 14 14)" : undefined}>
      <rect x="2" y="1" width="24" height="26" rx="3" fill={soft ? "#f7a57c" : "#e0521f"} stroke="#fff" strokeWidth="2" />
      <path d="M20 7.500c-5-2.500-12-1.500-11.500 2s11.500 3 11.500 7-8 5-13 2.500" fill="none" stroke="#fff" strokeWidth="4" />
    </g>
  </svg>
);

const SlideThumbs = () => (
  <ThumbPane>
    <ThumbItem>
      <ThumbNumber>1</ThumbNumber>
      <Thumb><ThumbTitle>Kubernetes应用场景</ThumbTitle><ThumbAuthor>周益佳</ThumbAuthor></Thumb>
    </ThumbItem>
    <ThumbItem $on>
      <ThumbNumber>2</ThumbNumber>
      <Thumb $on>
        <ThumbHeading><ThumbLatin>Kubernetes</ThumbLatin>最佳的应用场景<ThumbLatin>——</ThumbLatin>微服务架构</ThumbHeading>
        <Pointer width="13" height="20" viewBox="0 0 13 20"><path d="M.5.5v16l4-4 3 6.500 2.500-1-3-6.500H12z" fill="#fff" stroke="#222" /></Pointer>
      </Thumb>
    </ThumbItem>
    <ThumbItem><ThumbNumber>3</ThumbNumber><Thumb><Diagram title="方便业务版本升级增加新功能" x={130} y={19} /></Thumb></ThumbItem>
    <ThumbItem><ThumbNumber>4</ThumbNumber><Thumb><Diagram title="支持更好的性能扩展" x={126} y={20} /></Thumb></ThumbItem>
    <ThumbItem><ThumbNumber>5</ThumbNumber><Thumb><Diagram title="k8s弹性伸缩" x={125} y={16} /></Thumb></ThumbItem>
  </ThumbPane>
);

const W = "#ffece4";

export default function App() {
  return (
    <Desktop>
      <Global />
      <TitleBar>
        <QuickAccess>
          <QuickButton $w={16} $gap={14} aria-label="PowerPoint"><PptLogo s={16} /></QuickButton>
          <QuickButton $w={14} $gap={15} aria-label="保存">
            <Ico w={14} h={14} c="#8155a5" sw={2}><path d="M1 1h12v12H1z" /><path d="M1 7h12M4 9h6v4H4z" fill="#8155a5" /></Ico>
          </QuickButton>
          <QuickButton $w={25} $gap={15} aria-label="撤消">
            <Ico w={14} h={13} c="#3f74b4" sw={2}><path d="M6 0 1.500 4.500 6 9M2 4.500h6c7 0 6 6 1 8" /></Ico><Caret />
          </QuickButton>
          <QuickButton $w={14} $gap={15} aria-label="恢复">
            <Ico w={14} h={14} c="#3f74b4" sw={2}><path d="M3.500 3A5.500 5.500 0 1 0 10 2.500M8 6V1.500h5" /></Ico>
          </QuickButton>
          <QuickButton $w={16} $gap={11} aria-label="从头开始">
            <Ico w={16} h={15}><path d="M0 1h15M1.500 1v8H6M5 14h6M8 11v3" /><circle cx="10.500" cy="7.500" r="4" fill="#fff" /><path d="M9 5.500v4l4-2z" fill="#5f9c78" stroke="none" /></Ico>
          </QuickButton>
          <QuickButton $w={6} aria-label="自定义"><Ico w={6} h={7} c="#666"><path d="M0 .5h6" /><path d="M0 3h6L3 6.500z" fill="#666" stroke="none" /></Ico></QuickButton>
        </QuickAccess>
        <TitleText>03-k8s的应用场景.pptx -  PowerPoint(产品激活失败)</TitleText>
        <WindowControls>
          <PlainButton aria-label="帮助"><Ico w={8} h={11} sw={2}><path d="M1 3.500C1 0 7 0 7 3.200 7 5 4 5 4 7.500M4 9v2" /></Ico></PlainButton>
          <PlainButton aria-label="功能区显示选项"><Ico w={14} h={11}><path d="M.5.5h13v10H.5zM1 2.500h12M7 9.500V4.500M5 6.500l2-2 2 2" /></Ico></PlainButton>
          <PlainButton aria-label="最小化"><Ico w={10} h={11} sw={2}><path d="M0 8h9" /></Ico></PlainButton>
          <PlainButton aria-label="向下还原"><Ico w={11} h={11}><path d="M.5 4.500h7v5h-7zM.5 5.500h7M3 4V1.500h7.500v5H8M3 2.500h7" /></Ico></PlainButton>
          <PlainButton aria-label="关闭"><Ico w={10} h={10} sw={2}><path d="M1 1l8 8M9 1 1 9" /></Ico></PlainButton>
        </WindowControls>
      </TitleBar>

      <TabBar>
        <FileTab>文件</FileTab>
        <ActiveTab>开始</ActiveTab>
        <TabList>
          {["插入", "设计", "切换", "动画", "幻灯片放映", "审阅", "视图", "加载项"].map((t) => (
            <button key={t}>{t}</button>
          ))}
        </TabList>
        <SignIn>登录</SignIn>
        <svg width="24" height="24" viewBox="0 0 24 24" aria-hidden="true">
          <path d="M0 0h24v24H0z" fill="#b0b0b0" />
          <ellipse cx="12" cy="8.500" rx="4.500" ry="5.500" fill="#fff" />
          <path d="M3 24v-5c0-3 3-5 6-5h6c3 0 6 2 6 5v5z" fill="#fff" />
        </svg>
      </TabBar>

      <Ribbon>
        <ClipboardGroup />
        <SlidesGroup />
        <FontGroup />
        <ParagraphGroup />
        <DrawingGroup />
        <EditGroup />
        <RibbonEnd>
          <PlainButton aria-label="折叠功能区"><Ico w={9} h={6} sw={2}><path d="M1 5l3.500-3.500L8 5" /></Ico></PlainButton>
        </RibbonEnd>
      </Ribbon>

      <Workspace>
        <SlideThumbs />
        <Editor>
          <Stage>
            <Canvas>
              <Slide>
                <SlideTitle><SlideLatin>Kubernetes</SlideLatin>最佳的应用场景<SlideDash>——</SlideDash>微服务架构</SlideTitle>
              </Slide>
            </Canvas>
            <ScrollColumn>
              <ScrollButton aria-label="向上"><Caret up /></ScrollButton>
              <ScrollTrack><ScrollThumb /></ScrollTrack>
              <ScrollButton aria-label="向下"><Caret /></ScrollButton>
              <ScrollButton $plain aria-label="上一张幻灯片"><Ico w={8} h={8} c="none"><path d="M4 0l4 4H0zM4 3l4 5H0z" fill="#666" /></Ico></ScrollButton>
              <ScrollButton $plain aria-label="下一张幻灯片"><Ico w={8} h={8} c="none"><path d="M0 0h8L4 5zM0 4h8L4 8z" fill="#666" /></Ico></ScrollButton>
            </ScrollColumn>
          </Stage>
          <Notes aria-label="备注" placeholder="单击此处添加备注" />
        </Editor>
      </Workspace>

      <StatusBar>
        <span>幻灯片 第 2 张 , 共 5 张</span>
        <Gap $w={27} />
        <Ico w={15} h={13} c={W}><path d="M7 2.500C5 .5 2 .5.500 1v10c2-.500 5-.500 6.500 1V2.500C8.500 1 11 .5 13 1v3M7 12c1-1 3-1.500 5-1M9 7l2 2 4-4" /></Ico>
        <Gap $w={16} />
        <span>中文(中国)</span>
        <Spacer />
        <StatusButton $mr={20}><Ico w={12} h={12} c={W}><path d="M3 4h6L6 0z" fill={W} stroke="none" /><path d="M0 6.500h12M0 9.500h12M0 12h8" /></Ico>备注</StatusButton>
        <StatusButton $mr={19}><Ico w={12} h={12} c="none"><path d="M0 0h12v9H8l-3 3V9H0z" fill={W} /></Ico>批注</StatusButton>
        <ViewButton $on aria-label="普通"><Ico w={14} h={13} c={W} sw={2}><path d="M1 1h12v11H1zM4 1v11M6 9h7" /><path d="M7 4h3v2H7z" fill={W} strokeWidth="1" /></Ico></ViewButton>
        <ViewButton aria-label="幻灯片浏览"><Ico w={14} h={13} c="none"><path d="M0 0h6v5H0zM8 0h6v5H8zM0 8h6v5H0zM8 8h6v5H8z" fill={W} /></Ico></ViewButton>
        <ViewButton aria-label="阅读视图"><Ico w={13} h={13} c={W}><path d="M6.500 2 .5.5V11l6 1.500 6-1.500V.5zM6.500 2v10M2 3.500l3 .7M2 5.500l3 .7M2 7.500l3 .7M11 3.500l-3 .7M11 5.500l-3 .7M11 7.500l-3 .7" /></Ico></ViewButton>
        <ViewButton aria-label="幻灯片放映"><Ico w={13} h={13} c={W}><path d="M0 1h13M1.500 1v6.500h10V1M4 4.500h5M6.500 8v4M3.500 12.500h6" /></Ico></ViewButton>
        <Gap $w={5} />
        <PlainButton aria-label="缩小"><Ico w={6} h={8} c="#fff" sw={2}><path d="M0 4h6" /></Ico></PlainButton>
        <Zoom type="range" aria-label="显示比例" min={0} max={100} defaultValue={52} />
        <PlainButton aria-label="放大"><Ico w={8} h={8} c="#fff" sw={2}><path d="M0 4h8M4 0v8" /></Ico></PlainButton>
        <ZoomValue>110%</ZoomValue>
        <PlainButton aria-label="使幻灯片适应当前窗口"><Ico w={14} h={13} c={W}><path d="M.5.5h13v12H.5zM7 2v3M7 8v3M2.500 6.500H5M9 6.500h2.500M3 3l2 2M11 3 9 5M3 10l2-2M11 10 9 8" /></Ico></PlainButton>
      </StatusBar>

      <TaskBar>
        <TaskButton $w={54} aria-label="开始">
          <svg width="38" height="36" viewBox="0 0 38 36" aria-hidden="true">
            <defs><radialGradient id="orb" cx=".5" cy=".9" r=".9"><stop offset="0" stopColor="#3fd0ff" /><stop offset=".5" stopColor="#1f6eb0" /><stop offset="1" stopColor="#8fa9bd" /></radialGradient></defs>
            <circle cx="19" cy="19" r="18" fill="url(#orb)" stroke="#24435e" />
            <path d="M11 10c3-2 5-2 8 0l-2 8c-2-2-5-2-8 0z" fill="#f26b3a" /><path d="M20 11c3 2 6 2 9 0l-2 8c-3 2-6 2-9 0z" fill="#a8d05a" />
            <path d="M9 19c3-2 5-2 8 0l-2 8c-3-2-5-2-8 0z" fill="#7ec0ee" /><path d="M18 20c3 2 6 2 9 0l-2 8c-3 2-6 2-9 0z" fill="#fbd04f" />
          </svg>
        </TaskButton>
        <TaskButton $w={60} $gap={6} aria-label="应用">
          <svg width="32" height="32" viewBox="0 0 32 32" aria-hidden="true">
            <path d="M15.500 15.500H9a7.500 7.500 0 1 1 6.500-7.500z" fill="#a6cf2c" />
            <path d="M16.500 15.500V9a7.500 7.500 0 1 1 7.500 6.500z" fill="#3c82dc" />
            <path d="M15.500 16.500V23A7.500 7.500 0 1 1 8 16.500z" fill="#f5b51e" />
            <path d="M16.500 16.500H23a7.500 7.500 0 1 1-6.500 7.500z" fill="#e25a41" />
          </svg>
        </TaskButton>
        <TaskButton $w={58} $gap={4} $tone="open" aria-label="资源管理器">
          <svg width="34" height="30" viewBox="0 0 34 30" aria-hidden="true">
            <path d="M2 4h12l2 3h16v20H2z" fill="#e3bf63" /><path d="M4 1h6v4H4z" fill="#4f9b3b" /><path d="M19 3h8v4h-8z" fill="#4a90d0" />
            <path d="M1 8h32v19H1z" fill="#f8e6a6" /><path d="M6 29V19c0-2 2-2 4-2h14c2 0 4 0 4 2v10h-5v-6H11v6z" fill="#8fcaf0" stroke="#5aa2d4" />
          </svg>
        </TaskButton>
        <TaskButton $w={58} $gap={4} aria-label="Notepad++">
          <svg width="30" height="32" viewBox="0 0 30 32" aria-hidden="true">
            <path d="M1 3h19l4 5v23H1z" fill="#fff" /><path d="M2 21h21v9H2z" fill="#5ea524" /><path d="M2 16h21v6H2z" fill="#cfe8ae" />
            <path d="M2 2.500h20" stroke="#666" strokeDasharray="1 1" /><path d="M5 6h14M5 8h14" stroke="#ccc" />
            <path d="M7 20v-9h4v9M12 15h5M14.500 12.500v5M18 15h5M20.500 12.500v5" stroke="#111" strokeWidth="1.500" fill="none" />
            <path d="M27 0l3 2-9 21-4 3 1-5z" fill="#e29a24" />
          </svg>
        </TaskButton>
        <TaskButton $w={58} $gap={4} $tone="open" aria-label="Chrome">
          <svg width="30" height="30" viewBox="0 0 30 30" aria-hidden="true">
            <circle cx="15" cy="15" r="15" fill="#3aa757" /><path d="M2 7.500A15 15 0 0 1 28 7.500L15 9z" fill="#e8453c" /><path d="M2 7.500 9 18l6-9z" fill="#e8453c" />
            <path d="M28 7.500A15 15 0 0 1 14 30l7-11-6-11z" fill="#fbc116" /><circle cx="15" cy="15" r="7" fill="#fff" /><circle cx="15" cy="15" r="5.500" fill="#4285f4" />
          </svg>
        </TaskButton>
        <TaskButton $w={58} $gap={4} aria-label="画图">
          <svg width="32" height="32" viewBox="0 0 32 32" aria-hidden="true">
            <circle cx="16" cy="16" r="15.500" fill="#f6bb45" stroke="#c98a20" /><ellipse cx="15" cy="13" rx="12" ry="10" fill="#fbd98a" opacity=".6" />
            <circle cx="16" cy="6" r="3.500" fill="#3f9bd0" /><circle cx="8" cy="10" r="3.500" fill="#62b530" /><circle cx="6" cy="18" r="3" fill="#e5502c" /><circle cx="17" cy="25" r="3" fill="#5a4630" />
          </svg>
        </TaskButton>
        <TaskButton $w={58} $tone="active" aria-label="PowerPoint"><PptLogo s={30} /></TaskButton>
        <Tray>
          <SogouMark s={17} />
          <Ico w={12} h={5} c="none"><path d="M4 5h8L8 0z" fill="#fff" /></Ico>
          <Gap $w={0} />
          <Ico w={17} h={17} c="none"><circle cx="8.500" cy="8.500" r="8" fill="#f2e21c" /><path d="M1 12A8 8 0 0 0 15 13" stroke="#6fbf3a" strokeWidth="2" /><path d="M8.500 4v9M4 8.500h9" stroke="#1c5b17" strokeWidth="2.500" /></Ico>
          <Ico w={14} h={16} c="#fff"><path d="M2 1h4v1h2M6 15H1V3h5" strokeWidth="1.500" /><path d="M8 0v4M12 0v4" strokeWidth="1.500" /><path d="M6 4h8v4l-2 2H8L6 8zM9 10h2v6H9zM3 5h2v8H3z" fill="#fff" stroke="none" /></Ico>
          <Ico w={16} h={14} c="#fff"><path d="M0 4h3l4-4v14l-4-4H0z" fill="#ddd" stroke="none" /><path d="M9 5c1 1 1 3 0 4M11 3c2 2 2 6 0 8M13 1c3 3 3 9 0 12" /></Ico>
          <Ico w={15} h={15} c="#fff" sw={1.5}><path d="M5 4h9v7H4V8M6 14h7M9 11v3M1 0v4h4V0M3 4v4" /></Ico>
          <TrayBadge>24</TrayBadge>
          <ShowDesktop aria-label="显示桌面" />
        </Tray>
      </TaskBar>

      <InputBar>
        <SogouMark s={28} soft />
        <InputRule />
        <InputLang>中</InputLang>
        <Ico w={13} h={13} c="none"><path d="M8 0c5 3 6 8 2 11s-9 1-10-1c7 0 10-4 8-10z" fill="#4a8fd0" /></Ico>
        <Gap $w={8} />
        <Ico w={10} h={13} c="#4a8fd0"><circle cx="2.500" cy="2.500" r="2" /><path d="M7 8h3c0 2-1 4-3 5 1-2 1-3 0-5z" fill="#4a8fd0" stroke="none" /></Ico>
        <Gap $w={8} />
        <Ico w={17} h={12} c="#fff"><path d="M0 0h17v12H0z" fill="#4a8fd0" stroke="none" /><path d="M2 3h13M2 6h13" strokeDasharray="2 1" strokeWidth="1.500" /><path d="M2 9h2M5 9h7M13 9h2" strokeWidth="1.500" /></Ico>
        <Gap $w={8} />
        <Ico w={10} h={13} c="none"><circle cx="5" cy="3" r="3" fill="#999" /><path d="M0 12V9c0-2 2-3 3-3h4c1 0 3 1 3 3v3c-2 1-8 1-10 0z" fill="#999" /></Ico>
        <Gap $w={7} />
        <Ico w={14} h={13} c="#4a8fd0" sw={2.5}><path d="M1 12l6-6" /><path d="M10 1C6 1 6 6 8 7s5 0 5-3l-3 1-1-1z" fill="#4a8fd0" stroke="none" /></Ico>
      </InputBar>

      <Watermark>
        <Ico w={30} h={26} c="#fff" sw={2}><path d="M1 25l6-6C1 15 1 2 11 2s10 13 4 17l6 6M22 4c8 0 9 10 3 14l5 6" /></Ico>
        1人正在看
      </Watermark>
    </Desktop>
  );
}
